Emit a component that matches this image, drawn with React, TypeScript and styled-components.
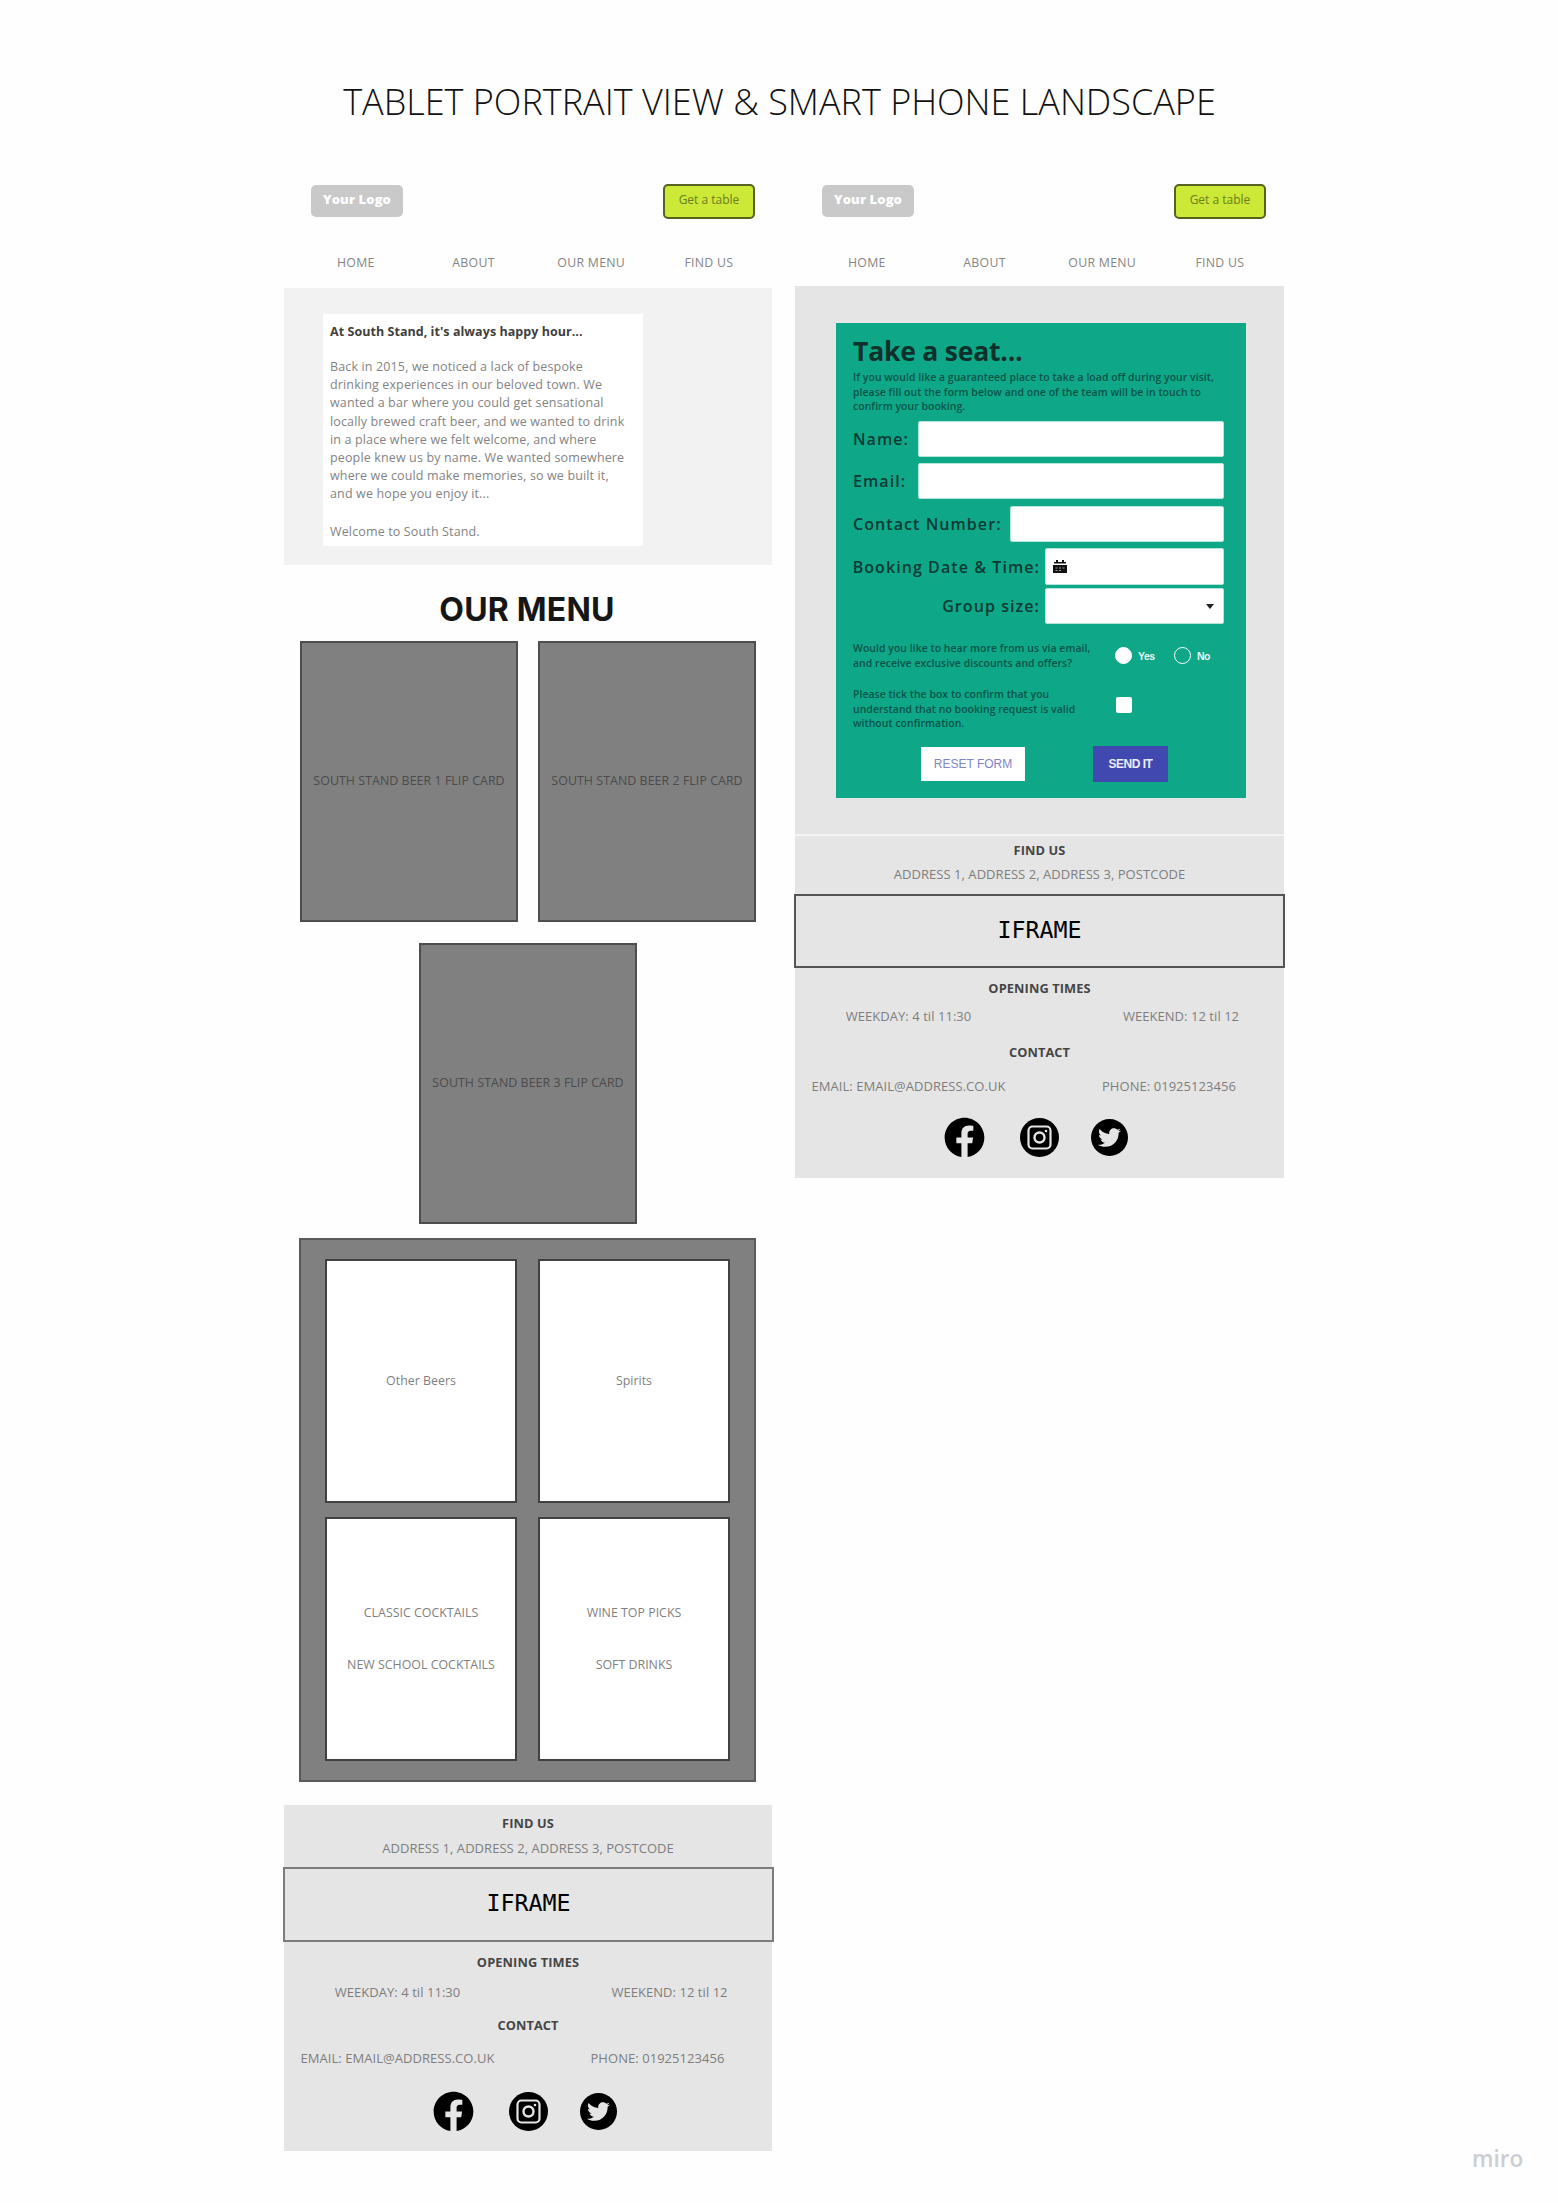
import React from "react";
import styled, { createGlobalStyle } from "styled-components";
import { FaFacebook, FaTwitter } from "react-icons/fa";

const GlobalStyle = createGlobalStyle`
  *, *::before, *::after { box-sizing: border-box; }
  body {
    margin: 0;
    background: #fefefe;
    font-family: "Open Sans", "Noto Sans", sans-serif;
    color: #808080;
  }
  h1, h2, h3, p { margin: 0; }
`;

const Page = styled.main`
  display: flex;
  flex-direction: column;
  width: 1558px;
  height: 2203px;
  overflow: hidden;
`;

const PageTitle = styled.h1`
  height: 170px;
  padding-top: 72px;
  padding-left: 1px;
  font-size: 36px;
  font-weight: 300;
  line-height: 60px;
  text-align: center;
  white-space: nowrap;
  color: #111111;
`;

const Board = styled.div`
  display: flex;
  align-items: flex-start;
  gap: 23px;
  height: 2007px;
  padding-left: 284px;
`;

const Frame = styled.section<{ $w: number }>`
  display: flex;
  flex-direction: column;
  flex: none;
  width: ${(p) => p.$w}px;
`;

const HeaderBar = styled.header`
  display: flex;
  align-items: center;
  gap: 260px;
  height: 62px;
  padding-left: 27px;
`;

const Logo = styled.div`
  width: 92px;
  height: 32px;
  border-radius: 5px;
  background: #c9c9c9;
  color: #ffffff;
  font-size: 13px;
  font-weight: 800;
  letter-spacing: 0.1px;
  line-height: 29px;
  text-align: center;
`;

const TableButton = styled.button`
  width: 92px;
  height: 35px;
  padding: 0 0 3px;
  border: 2px solid #55631c;
  border-radius: 5px;
  background: #cbe936;
  color: #6c7c20;
  font: 400 12px/1 "Open Sans", sans-serif;
`;

const Nav = styled.nav<{ $height: number; $top: number }>`
  display: grid;
  grid-template-columns: repeat(4, 117.7px);
  height: ${(p) => p.$height}px;
  padding: ${(p) => p.$top}px 0 0 13px;
  justify-items: center;
  align-items: center;
  font-size: 12.3px;
  letter-spacing: 0.3px;
  color: #858585;
`;

const Hero = styled.div`
  height: 277px;
  padding: 26px 0 0 39px;
  background: #f2f2f2;
`;

const Story = styled.article`
  width: 320px;
  height: 232px;
  padding: 9px 0 0 7px;
  background: #ffffff;
  font-size: 12.5px;
  letter-spacing: 0.14px;
  line-height: 18.2px;
  white-space: pre;
  color: #838383;
`;

const StoryHeading = styled.h3`
  margin-bottom: 17px;
  font-size: 12.5px;
  font-weight: 700;
  letter-spacing: 0.05px;
  line-height: 18px;
  color: #404040;
`;

const StoryText = styled.p`
  margin-bottom: 19px;
`;

const MenuHeading = styled.h2`
  height: 76px;
  padding: 25px 2px 0 0;
  font-family: Inter, "Open Sans", sans-serif;
  font-size: 32px;
  font-weight: 700;
  letter-spacing: 0.2px;
  line-height: 40px;
  text-align: center;
  color: #161616;
`;

const Cards = styled.div`
  display: flex;
  flex-wrap: wrap;
  justify-content: center;
  gap: 21px 20px;
  padding-bottom: 14px;
`;

const Card = styled.div`
  display: flex;
  align-items: center;
  justify-content: center;
  width: 218px;
  height: 281px;
  padding-bottom: 2px;
  border: 2px solid #4e4e4e;
  background: #808080;
  color: #4b4b4b;
  font-size: 12.4px;
  letter-spacing: 0.05px;
  white-space: nowrap;
`;

const MenuPanel = styled.div`
  display: grid;
  grid-template-columns: 192px 192px;
  grid-template-rows: 244px 244px;
  gap: 14px 21px;
  width: 457px;
  height: 544px;
  margin: 0 0 23px 15px;
  padding: 19px 0 0 24px;
  border: 2px solid #5a5a5a;
  background: #808080;
`;

const MenuBox = styled.div`
  display: flex;
  flex-direction: column;
  align-items: center;
  justify-content: center;
  gap: 34px;
  border: 2px solid #414141;
  background: #ffffff;
  font-size: 12.4px;
  line-height: 18px;
  white-space: nowrap;
`;

const FooterArea = styled.footer<{ $ruled?: boolean }>`
  display: flex;
  flex-direction: column;
  height: ${(p) => (p.$ruled ? 344 : 346)}px;
  border-top: ${(p) => (p.$ruled ? "2px solid #f3f3f3" : "none")};
  background: #e5e5e5;
`;

const FooterRow = styled.div<{ $h: number; $bold?: boolean }>`
  display: flex;
  flex: none;
  align-items: center;
  justify-content: center;
  height: ${(p) => p.$h}px;
  font-size: ${(p) => (p.$bold ? 12.8 : 13)}px;
  font-weight: ${(p) => (p.$bold ? 700 : 400)};
  color: ${(p) => (p.$bold ? "#454545" : "#7e7e7e")};
  letter-spacing: ${(p) => (p.$bold ? 0.1 : 0.05)}px;
  white-space: nowrap;
`;

const LeftCell = styled.span`
  width: 227px;
  text-align: center;
`;

const RightCell = styled.span<{ $indent: number }>`
  flex: 1;
  padding-left: ${(p) => p.$indent}px;
  text-align: center;
`;

const MapFrame = styled.div<{ $h: number; $gap: number; $line: string }>`
  display: flex;
  flex: none;
  align-items: center;
  justify-content: center;
  width: 491px;
  height: ${(p) => p.$h}px;
  margin: ${(p) => p.$gap}px 0 0 -1px;
  padding-bottom: 4px;
  border: 2px solid ${(p) => p.$line};
  color: #000000;
  font-family: "DejaVu Sans Mono", "Liberation Mono", monospace;
  font-size: 23.3px;
`;

const Socials = styled.div<{ $top: number }>`
  display: flex;
  align-items: center;
  padding: ${(p) => p.$top}px 0 0 149px;
  color: #000000;
  svg { display: block; }
`;

const InstagramSlot = styled.span`
  margin: 0 32px 0 35px;
`;

const TwitterDisc = styled.span`
  display: flex;
  align-items: center;
  justify-content: center;
  width: 37px;
  height: 37px;
  border-radius: 50%;
  background: #000000;
  color: #e5e5e5;
`;

const BookingArea = styled.div`
  height: 548px;
  padding: 37px 0 0 41px;
  background: #e5e5e5;
`;

const BookingForm = styled.form`
  display: flex;
  flex-direction: column;
  width: 410px;
  height: 475px;
  padding: 15px 22px 0 17px;
  background: #0ea788;
  color: #0a3a33;
`;

const FormTitle = styled.h2`
  height: 32px;
  font-size: 26.5px;
  font-weight: 700;
  line-height: 27px;
  letter-spacing: -0.2px;
  color: #0e302b;
`;

const FinePrint = styled.p<{ $h: number }>`
  flex: none;
  height: ${(p) => p.$h}px;
  font-size: 10.4px;
  font-weight: 600;
  letter-spacing: 0.07px;
  line-height: 14.7px;
  white-space: pre;
  color: #075447;
`;

const Field = styled.label<{ $gap: number; $h: number; $end?: boolean }>`
  display: flex;
  flex: none;
  align-items: center;
  justify-content: ${(p) => (p.$end ? "flex-end" : "space-between")};
  gap: 5px;
  height: ${(p) => p.$h}px;
  margin-bottom: ${(p) => p.$gap}px;
  font-size: 16px;
  font-weight: 600;
  letter-spacing: 1.07px;
  white-space: nowrap;
`;

const FieldBox = styled.span<{ $w: number }>`
  display: flex;
  flex: none;
  align-items: center;
  justify-content: space-between;
  width: ${(p) => p.$w}px;
  height: 100%;
  padding: 0 9px 0 7px;
  border: 1px solid #b4e6db;
  border-radius: 2px;
  background: #ffffff;
`;

const Caret = styled.i`
  width: 0;
  height: 0;
  margin-left: auto;
  border: 4px solid transparent;
  border-top: 5px solid #222222;
  border-bottom: 0;
`;

const Question = styled.div<{ $h: number }>`
  display: flex;
  flex: none;
  height: ${(p) => p.$h}px;
`;

const QuestionText = styled.div`
  width: 262px;
`;

const Choices = styled.div`
  display: grid;
  grid-template-columns: 23px 36px 23px 24px;
  align-items: center;
  height: 29px;
  color: #e6f8f4;
  font: 700 10.5px "Liberation Sans", sans-serif;
  letter-spacing: -0.5px;
`;

const Radio = styled.span<{ $on?: boolean }>`
  width: 17px;
  height: 17px;
  border: 1.5px solid #ffffff;
  border-radius: 50%;
  background: ${(p) => (p.$on ? "#ffffff" : "transparent")};
`;

const Checkbox = styled.span`
  width: 16px;
  height: 16px;
  margin: 10px 0 0 1px;
  border-radius: 2px;
  background: #ffffff;
`;

const Actions = styled.div`
  display: flex;
  align-items: center;
  gap: 68px;
  padding-left: 68px;
`;

const ActionButton = styled.button<{ $primary?: boolean }>`
  width: ${(p) => (p.$primary ? 75 : 104)}px;
  height: ${(p) => (p.$primary ? 36 : 34)}px;
  padding: 0;
  border: 0;
  background: ${(p) => (p.$primary ? "#4149b0" : "#ffffff")};
  color: ${(p) => (p.$primary ? "#ecedff" : "#7f85c4")};
  font: ${(p) => (p.$primary ? 700 : 400)} 12px "Liberation Sans", sans-serif;
  letter-spacing: ${(p) => (p.$primary ? -0.5 : 0)}px;
`;

const Wordmark = styled.div`
  align-self: flex-end;
  margin-left: 165px;
  color: #cdcdd4;
  font-size: 22.5px;
  font-weight: 600;
  line-height: 37px;
`;

const InstagramIcon = () => (
  <svg width="39" height="39" viewBox="0 0 39 39" fill="none">
    <circle cx="19.5" cy="19.5" r="19.5" fill="#000" />
    <rect x="8.5" y="8.5" width="22" height="22" rx="4" stroke="#e5e5e5" strokeWidth="2.2" />
    <circle cx="19.5" cy="19.5" r="5" stroke="#e5e5e5" strokeWidth="2.4" />
    <circle cx="26" cy="13" r="1.3" fill="#e5e5e5" />
  </svg>
);

const CalendarIcon = () => (
  <svg width="14" height="15" viewBox="0 0 14 15">
    <path d="M3 1h2v2H3zM9 1h2v2H9zM1 3h12v1.5H1zM0 6h14v8H0z" fill="#111" />
    <path d="M2.5 8.5h2v1h-2zM6 8.5h2v1H6zM9.5 8.5h2v1h-2zM2.5 11h2v1h-2zM6 11h2v1H6z" fill="#999" />
  </svg>
);

const navItems = ["HOME", "ABOUT", "OUR MENU", "FIND US"];

const Header = ({ height, top }: { height: number; top: number }) => (
  <>
    <HeaderBar>
      <Logo>Your Logo</Logo>
      <TableButton>Get a table</TableButton>
    </HeaderBar>
    <Nav $height={height} $top={top}>
      {navItems.map((item) => (
        <span key={item}>{item}</span>
      ))}
    </Nav>
  </>
);

type FooterProps = {
  ruled?: boolean;
  rows: [number, number, number, number, number, number];
  mapGap: number;
  mapHeight: number;
  line: string;
  socialsTop: number;
};

const Footer = ({ ruled, rows, mapGap, mapHeight, line, socialsTop }: FooterProps) => (
  <FooterArea $ruled={ruled}>
    <FooterRow $h={rows[0]} $bold>FIND US</FooterRow>
    <FooterRow $h={rows[1]}>ADDRESS 1, ADDRESS 2, ADDRESS 3, POSTCODE</FooterRow>
    <MapFrame $h={mapHeight} $gap={mapGap} $line={line}>IFRAME</MapFrame>
    <FooterRow $h={rows[2]} $bold>OPENING TIMES</FooterRow>
    <FooterRow $h={rows[3]}>
      <LeftCell>WEEKDAY: 4 til 11:30</LeftCell>
      <RightCell $indent={56}>WEEKEND: 12 til 12</RightCell>
    </FooterRow>
    <FooterRow $h={rows[4]} $bold>CONTACT</FooterRow>
    <FooterRow $h={rows[5]}>
      <LeftCell>EMAIL: EMAIL@ADDRESS.CO.UK</LeftCell>
      <RightCell $indent={32}>PHONE: 01925123456</RightCell>
    </FooterRow>
    <Socials $top={socialsTop}>
      <FaFacebook size={41} />
      <InstagramSlot><InstagramIcon /></InstagramSlot>
      <TwitterDisc><FaTwitter size={23} /></TwitterDisc>
    </Socials>
  </FooterArea>
);

const story = `Back in 2015, we noticed a lack of bespoke
drinking experiences in our beloved town. We
wanted a bar where you could get sensational
locally brewed craft beer, and we wanted to drink
in a place where we felt welcome, and where
people knew us by name. We wanted somewhere
where we could make memories, so we built it,
and we hope you enjoy it...`;

const intro = `If you would like a guaranteed place to take a load off during your visit,
please fill out the form below and one of the team will be in touch to
confirm your booking.`;

const emailQuestion = `Would you like to hear more from us via email,
and receive exclusive discounts and offers?`;

const confirmQuestion = `Please tick the box to confirm that you
understand that no booking request is valid
without confirmation.`;

export default function App() {
  return (
    <Page>
      <GlobalStyle />
      <PageTitle>TABLET PORTRAIT VIEW &amp; SMART PHONE LANDSCAPE</PageTitle>
      <Board>
        <Frame $w={488}>
          <Header height={56} top={4} />
          <Hero>
            <Story>
              <StoryHeading>At South Stand, it's always happy hour...</StoryHeading>
              <StoryText>{story}</StoryText>
              <p>Welcome to South Stand.</p>
            </Story>
          </Hero>
          <MenuHeading>OUR MENU</MenuHeading>
          <Cards>
            {[1, 2, 3].map((n) => (
              <Card key={n}>SOUTH STAND BEER {n} FLIP CARD</Card>
            ))}
          </Cards>
          <MenuPanel>
            <MenuBox>Other Beers</MenuBox>
            <MenuBox>Spirits</MenuBox>
            <MenuBox>
              <span>CLASSIC COCKTAILS</span>
              <span>NEW SCHOOL COCKTAILS</span>
            </MenuBox>
            <MenuBox>
              <span>WINE TOP PICKS</span>
              <span>SOFT DRINKS</span>
            </MenuBox>
          </MenuPanel>
          <Footer rows={[36, 13, 40, 19, 48, 18]} mapGap={13} mapHeight={75} line="#7c7c7c" socialsTop={24} />
        </Frame>
        <Frame $w={489}>
          <Header height={54} top={6} />
          <BookingArea>
            <BookingForm>
              <FormTitle>Take a seat...</FormTitle>
              <FinePrint $h={51}>{intro}</FinePrint>
              <Field $h={36} $gap={6}>Name:<FieldBox $w={306} /></Field>
              <Field $h={36} $gap={7}>Email:<FieldBox $w={306} /></Field>
              <Field $h={36} $gap={6}>Contact Number:<FieldBox $w={214} /></Field>
              <Field $h={37} $gap={3} $end>
                Booking Date &amp; Time:
                <FieldBox $w={179}><CalendarIcon /></FieldBox>
              </Field>
              <Field $h={36} $gap={17} $end>
                Group size:
                <FieldBox $w={179}><Caret /></FieldBox>
              </Field>
              <Question $h={46}>
                <QuestionText><FinePrint $h={30}>{emailQuestion}</FinePrint></QuestionText>
                <Choices>
                  <Radio $on />
                  <span>Yes</span>
                  <Radio />
                  <span>No</span>
                </Choices>
              </Question>
              <Question $h={59}>
                <QuestionText><FinePrint $h={45}>{confirmQuestion}</FinePrint></QuestionText>
                <Checkbox />
              </Question>
              <Actions>
                <ActionButton type="button">RESET FORM</ActionButton>
                <ActionButton type="button" $primary>SEND IT</ActionButton>
              </Actions>
            </BookingForm>
          </BookingArea>
          <Footer ruled rows={[28, 20, 39, 18, 53, 15]} mapGap={10} mapHeight={74} line="#555555" socialsTop={24} />
        </Frame>
        <Wordmark>miro</Wordmark>
      </Board>
    </Page>
  );
}
